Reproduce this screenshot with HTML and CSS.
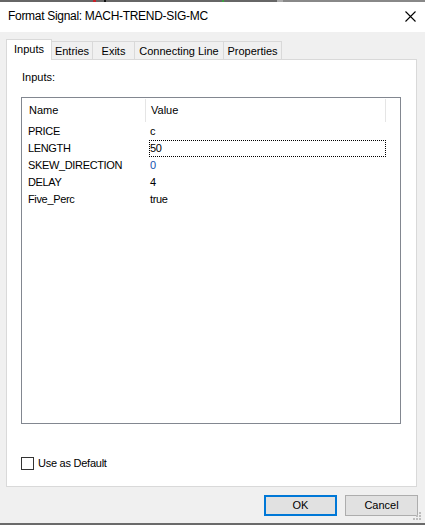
FILE: index.html
```html
<!DOCTYPE html>
<html>
<head>
<meta charset="utf-8">
<title>Format Signal</title>
<link rel="stylesheet" href="styles.css">
</head>
<body>
<div class="window">
  <div class="topstrip">
    <span class="seg seg-a"></span><span class="seg seg-red"></span><span class="seg seg-a2"></span><span class="seg seg-blk"></span><span class="seg seg-a3"></span><span class="seg seg-grn"></span><span class="seg seg-a4"></span><span class="seg seg-light"></span><span class="seg seg-b"></span>
  </div>
  <div class="titlebar">
    <span class="title">Format Signal: MACH-TREND-SIG-MC</span>
    <svg class="close" width="11" height="11" viewBox="0 0 11 11"><path d="M0.5 0.5L10.5 10.5M10.5 0.5L0.5 10.5" stroke="#000" stroke-width="1.1" fill="none"/></svg>
  </div>
  <div class="main">
    <div class="tabs">
      <div class="tab tab-active tab-inputs">Inputs</div>
      <div class="tab tab-entries">Entries</div>
      <div class="tab tab-exits">Exits</div>
      <div class="tab tab-line">Connecting Line</div>
      <div class="tab tab-props">Properties</div>
    </div>
    <div class="panel">
      <div class="panel-label">Inputs:</div>
      <div class="listbox">
        <div class="lb-header">
          <div class="hcell hcell-name">Name</div>
          <div class="hcell hcell-value">Value</div>
        </div>
        <div class="lb-row"><div class="cell-name">PRICE</div><div class="cell-value">c</div></div>
        <div class="lb-row"><div class="cell-name">LENGTH</div><div class="cell-value cell-focus">50</div></div>
        <div class="lb-row"><div class="cell-name">SKEW_DIRECTION</div><div class="cell-value cell-blue">0</div></div>
        <div class="lb-row"><div class="cell-name">DELAY</div><div class="cell-value">4</div></div>
        <div class="lb-row"><div class="cell-name">Five_Perc</div><div class="cell-value">true</div></div>
      </div>
      <div class="check-row">
        <span class="checkbox"></span>
        <span class="check-label">Use as Default</span>
      </div>
    </div>
    <div class="buttons">
      <button class="btn btn-default">OK</button>
      <button class="btn">Cancel</button>
    </div>
  </div>
  <div class="bottomline"></div>
  <svg class="grip" width="10" height="10" viewBox="0 0 10 10">
    <rect x="7" y="0" width="2" height="2" fill="#bdbdbd"/>
    <rect x="4" y="3" width="2" height="2" fill="#bdbdbd"/>
    <rect x="7" y="3" width="2" height="2" fill="#bdbdbd"/>
    <rect x="1" y="6" width="2" height="2" fill="#bdbdbd"/>
    <rect x="4" y="6" width="2" height="2" fill="#bdbdbd"/>
    <rect x="7" y="6" width="2" height="2" fill="#bdbdbd"/>
  </svg>
</div>
</body>
</html>
```

FILE: styles.css
```css
html, body {
  margin: 0;
  padding: 0;
  width: 425px;
  height: 525px;
  overflow: hidden;
  background: #f0f0f0;
}

.window {
  position: relative;
  width: 425px;
  height: 525px;
  display: flex;
  flex-direction: column;
  font-family: "Liberation Sans", Arial, sans-serif;
  font-size: 11px;
  color: #000;
  background: #f0f0f0;
}

/* top strip of the window behind */
.topstrip {
  height: 2px;
  display: flex;
  flex: none;
}
.seg { display: block; height: 2px; }
.seg-a { width: 93px; background: #666; }
.seg-red { width: 3px; background: #c8202a; }
.seg-a2 { width: 8px; background: #666; }
.seg-blk { width: 2px; background: #111; }
.seg-a3 { width: 116px; background: #666; }
.seg-grn { width: 2px; background: #3aa040; }
.seg-a4 { width: 53px; background: #666; }
.seg-light { width: 6px; background: #a9a9a9; }
.seg-b { flex: 1; background: #888; }

/* title bar */
.titlebar {
  height: 30px;
  flex: none;
  background: #fff;
  display: flex;
  justify-content: space-between;
  align-items: flex-start;
  padding: 0 9px 0 8px;
  box-sizing: border-box;
}
.title {
  font-size: 12px;
  line-height: 14px;
  letter-spacing: -0.3px;
  padding-top: 7px;
  color: #000;
}
.close {
  margin-top: 9px;
  display: block;
}

/* main area */
.main {
  flex: 1;
  padding: 7px 8px 0 6px;
  display: flex;
  flex-direction: column;
}

.tabs {
  height: 20px;
  display: flex;
  align-items: flex-end;
  flex: none;
}
.tab {
  box-sizing: border-box;
  height: 18px;
  border-top: 1px solid #d9d9d9;
  border-right: 1px solid #d9d9d9;
  background: #f0f0f0;
  text-align: center;
  line-height: 13px;
  padding-top: 3px;
  white-space: nowrap;
}
.tab-active {
  position: relative;
  z-index: 1;
  height: 21px;
  margin-bottom: -1px;
  background: #fff;
  border-left: 1px solid #d9d9d9;
}
.tab-inputs { width: 46px; }
.tab-entries { width: 41px; }
.tab-exits { width: 42px; }
.tab-line { width: 89px; }
.tab-props { width: 58px; }

.panel {
  box-sizing: border-box;
  height: 428px;
  border: 1px solid #d9d9d9;
  background: #fff;
  padding: 11px 15px 16px 14px;
  display: flex;
  flex-direction: column;
  flex: none;
}
.panel-label {
  line-height: 13px;
  margin-left: 1px;
  margin-bottom: 13px;
}

.listbox {
  box-sizing: border-box;
  width: 380px;
  height: 327px;
  border: 1px solid #828790;
  background: #fff;
  flex: none;
}
.lb-header {
  height: 25px;
  display: flex;
  align-items: center;
}
.hcell {
  box-sizing: border-box;
  height: 23px;
  line-height: 23px;
  border-right: 1px solid #e5e5e5;
}
.hcell-name { width: 124px; padding-left: 7px; }
.hcell-value { width: 240px; padding-left: 5px; }

.lb-row {
  height: 17px;
  display: flex;
  letter-spacing: -0.35px;
}
.cell-name {
  box-sizing: border-box;
  width: 124px;
  padding-left: 6px;
  line-height: 17px;
  white-space: nowrap;
}
.cell-value {
  box-sizing: border-box;
  width: 237px;
  margin-left: 3px;
  height: 17px;
  line-height: 15px;
  border: 1px dotted transparent;
}
.cell-focus { border-color: #000; }
.cell-blue { color: #1450b0; }

.check-row {
  margin-top: auto;
  display: flex;
  align-items: center;
  height: 13px;
}
.checkbox {
  box-sizing: border-box;
  width: 13px;
  height: 13px;
  border: 1px solid #333;
  background: #fff;
  flex: none;
}
.check-label {
  margin-left: 4px;
  line-height: 13px;
  letter-spacing: -0.25px;
}

.buttons {
  margin-top: 8px;
  margin-right: -1px;
  display: flex;
  justify-content: flex-end;
  gap: 8px;
  flex: none;
}
.btn {
  box-sizing: border-box;
  width: 73px;
  height: 21px;
  margin: 0;
  padding: 0;
  border: 1px solid #adadad;
  background: #e1e1e1;
  font-family: "Liberation Sans", Arial, sans-serif;
  font-size: 11px;
  color: #000;
  line-height: 17px;
}
.btn-default {
  border: 2px solid #0078d7;
}

.bottomline {
  height: 2px;
  flex: none;
  background: #6a6a6a;
}

.grip {
  position: absolute;
  right: 3px;
  bottom: 3px;
  display: block;
}
```
